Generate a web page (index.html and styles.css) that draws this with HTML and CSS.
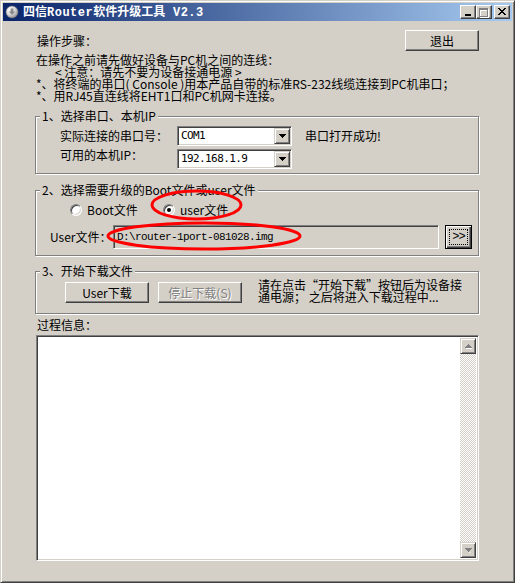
FILE: index.html
```html
<!DOCTYPE html>
<html lang="zh-CN">
<head>
<meta charset="utf-8">
<title>四信Router软件升级工具 V2.3</title>
<link rel="stylesheet" href="styles.css">
</head>
<body>
<div class="window">
  <div class="titlebar">
    <svg class="app-icon" width="16" height="16" viewBox="0 0 16 16">
      <defs>
        <radialGradient id="ig" cx="35%" cy="30%" r="75%">
          <stop offset="0" stop-color="#ffffff"/>
          <stop offset="0.55" stop-color="#d8d8d8"/>
          <stop offset="1" stop-color="#8c8c8c"/>
        </radialGradient>
      </defs>
      <circle cx="8" cy="8" r="6" fill="url(#ig)" stroke="#7a7a7a" stroke-width="0.6"/>
      <path d="M6.6 4.6 h2.8 v3 h1.8 l-3.2 3.4 l-3.2 -3.4 h1.8z" fill="#8a8a8a"/>
    </svg>
    <span class="title">四信<span class="lat">Router</span>软件升级工具<span class="lat"> V2.3</span></span>
    <div class="caption-btns">
      <span class="cbtn">
        <svg width="14" height="12" viewBox="0 0 14 12" shape-rendering="crispEdges"><rect x="4" y="8" width="6" height="2" fill="#000"/></svg>
      </span>
      <span class="cbtn">
        <svg width="14" height="12" viewBox="0 0 14 12" shape-rendering="crispEdges">
          <path d="M3 3 h9 v9 h-9z M4 5 h7 v6 h-7z" fill="#fff" fill-rule="evenodd"/>
          <path d="M2 2 h9 v9 h-9z M3 4 h7 v6 h-7z" fill="#808080" fill-rule="evenodd"/>
        </svg>
      </span>
      <span class="cbtn close">
        <svg width="14" height="12" viewBox="0 0 14 12" shape-rendering="crispEdges" fill="#000">
          <rect x="3" y="2" width="2" height="1"/><rect x="9" y="2" width="2" height="1"/>
          <rect x="4" y="3" width="2" height="1"/><rect x="8" y="3" width="2" height="1"/>
          <rect x="5" y="4" width="4" height="1"/>
          <rect x="6" y="5" width="2" height="1"/>
          <rect x="5" y="6" width="4" height="1"/>
          <rect x="4" y="7" width="2" height="1"/><rect x="8" y="7" width="2" height="1"/>
          <rect x="3" y="8" width="2" height="1"/><rect x="9" y="8" width="2" height="1"/>
        </svg>
      </span>
    </div>
  </div>

  <div class="client">
    <div class="top-row">
      <span class="steps-label">操作步骤：</span>
      <button class="btn exit">退出</button>
    </div>

    <div class="instructions">
      <div class="line">在操作之前请先做好设备与PC机之间的连线：</div>
      <div class="line indent">&lt; 注意：请先不要为设备接通电源 &gt;</div>
      <div class="line">*、将终端的串口( Console )用本产品自带的标准RS-232线缆连接到PC机串口；</div>
      <div class="line">*、用RJ45直连线将EHT1口和PC机网卡连接。</div>
    </div>

    <div class="group g1">
      <span class="legend">1、选择串口、本机IP</span>
      <div class="g1-grid">
        <span class="lbl">实际连接的串口号：</span>
        <span class="combo">
          <span class="combo-text">COM1</span>
          <span class="combo-btn"><svg width="7" height="4" viewBox="0 0 7 4" shape-rendering="crispEdges" fill="#000"><rect x="0" y="0" width="7" height="1"/><rect x="1" y="1" width="5" height="1"/><rect x="2" y="2" width="3" height="1"/><rect x="3" y="3" width="1" height="1"/></svg></span>
        </span>
        <span class="status">串口打开成功!</span>
        <span class="lbl lbl2">可用的本机IP：</span>
        <span class="combo">
          <span class="combo-text">192.168.1.9</span>
          <span class="combo-btn"><svg width="7" height="4" viewBox="0 0 7 4" shape-rendering="crispEdges" fill="#000"><rect x="0" y="0" width="7" height="1"/><rect x="1" y="1" width="5" height="1"/><rect x="2" y="2" width="3" height="1"/><rect x="3" y="3" width="1" height="1"/></svg></span>
        </span>
      </div>
    </div>

    <div class="group g2">
      <span class="legend">2、选择需要升级的Boot文件或user文件</span>
      <div class="radio-row">
        <span class="radio-opt"><span class="radio"></span><span>Boot文件</span></span>
        <span class="radio-opt"><span class="radio checked"></span><span>user文件</span></span>
      </div>
      <div class="file-row">
        <span class="file-label">User文件：</span>
        <span class="edit">D:\router-1port-081028.img</span>
        <button class="btn browse"><span class="focus">&gt;&gt;</span></button>
      </div>
    </div>

    <div class="group g3">
      <span class="legend">3、开始下载文件</span>
      <div class="dl-row">
        <button class="btn dl">User下载</button>
        <button class="btn dl stop">停止下载(S)</button>
        <div class="note">请在点击“开始下载”按钮后为设备接<br>通电源； 之后将进入下载过程中...</div>
      </div>
    </div>

    <div class="proc-label">过程信息：</div>
    <div class="listbox">
      <div class="vscroll">
        <span class="sbtn"><svg width="7" height="5" viewBox="0 0 7 5" shape-rendering="crispEdges"><path d="M3 0h1v1h1v1h1v1h1v1H0V3h1V2h1V1h1z" fill="#808080"/><rect x="1" y="4" width="7" height="1" fill="#fff"/></svg></span>
        <span class="track"></span>
        <span class="sbtn"><svg width="7" height="5" viewBox="0 0 7 5" shape-rendering="crispEdges"><path d="M0 0h7v1H6v1H5v1H4v1H3V3H2V2H1V1H0z" fill="#808080"/><rect x="4" y="4" width="1" height="1" fill="#fff"/></svg></span>
      </div>
    </div>
  </div>

  <svg class="overlay" width="515" height="583" viewBox="0 0 515 583">
    <ellipse cx="196.5" cy="205" rx="44.5" ry="14" fill="none" stroke="#ff0000" stroke-width="3"/>
    <ellipse cx="204" cy="236" rx="96" ry="13" fill="none" stroke="#ff0000" stroke-width="3"/>
  </svg>
</div>
</body>
</html>
```

FILE: styles.css
```css
* { box-sizing: border-box; }
html, body { margin: 0; padding: 0; }
body {
  width: 515px;
  height: 583px;
  overflow: hidden;
  background: #D4D0C8;
  font-family: "Noto Sans CJK SC", "Noto Sans", sans-serif;
  font-size: 12px;
  line-height: 12px;
  color: #000;
}

.window {
  position: relative;
  width: 515px;
  height: 583px;
  background: #D4D0C8;
  border: 1px solid;
  border-color: #D4D0C8 #404040 #404040 #D4D0C8;
  box-shadow: inset 1px 1px #fff, inset -1px -1px #808080;
  padding: 2px;
}

/* title bar */
.titlebar {
  display: flex;
  align-items: center;
  height: 18px;
  padding-left: 1px;
  background: linear-gradient(to right, #0A246A, #A6CAF0);
}
.app-icon { flex: none; }
.title {
  margin-left: 3px;
  color: #fff;
  font-weight: bold;
  white-space: pre;
}
.title .lat {
  font-family: "Liberation Mono", monospace;
  font-size: 12px;
  letter-spacing: 0.5px;
}
.caption-btns {
  margin-left: auto;
  margin-right: 2px;
  display: flex;
}
.cbtn {
  width: 16px;
  height: 14px;
  background: #D4D0C8;
  border: 1px solid;
  border-color: #fff #404040 #404040 #fff;
  box-shadow: inset -1px -1px #808080;
  display: block;
}
.cbtn svg { display: block; }
.cbtn.close { margin-left: 2px; }

/* client */
.client { padding-left: 32px; }

.btn {
  font: inherit;
  color: #000;
  margin: 0;
  padding: 0;
  background: #D4D0C8;
  border: 1px solid;
  border-color: #fff #404040 #404040 #fff;
  box-shadow: inset -1px -1px #808080;
  display: flex;
  align-items: center;
  justify-content: center;
  appearance: none;
  line-height: 12px;
  white-space: nowrap;
}

.top-row {
  width: 444px;
  margin-top: 9px;
  height: 21px;
  display: flex;
  align-items: center;
  justify-content: space-between;
}
.steps-label { margin-left: 2px; }
.btn.exit { width: 74px; height: 21px; }

.instructions {
  margin-top: 3px;
  padding-left: 1px;
  white-space: nowrap;
}
.instructions .line { height: 12px; white-space: pre; }
.instructions .indent { padding-left: 19px; }

/* group boxes */
.group {
  position: relative;
  width: 444px;
  border: 1px solid #808080;
  box-shadow: inset 1px 1px #fff, 1px 1px #fff;
}
.legend {
  position: absolute;
  top: -7px;
  left: 4px;
  padding: 0 2px;
  background: #D4D0C8;
  white-space: nowrap;
}

.g1 { margin-top: 14px; height: 58px; padding: 9px 0 0 24px; }
.g1-grid {
  display: grid;
  grid-template-columns: 117px 115px auto;
  grid-template-rows: 20px 20px;
  row-gap: 3px;
  align-items: center;
}
.lbl { white-space: nowrap; }
.lbl2 { align-self: start; }
.status { margin-left: 13px; white-space: nowrap; }

.combo {
  display: flex;
  align-items: center;
  height: 20px;
  padding: 1px;
  background: #fff;
  border: 1px solid;
  border-color: #808080 #fff #fff #808080;
  box-shadow: inset 1px 1px #404040, inset -1px -1px #D4D0C8;
}
.combo-text {
  padding-left: 2px;
  font-family: "DejaVu Sans Mono", monospace;
  font-size: 11px;
  letter-spacing: -0.6px;
}
.combo-btn {
  margin-left: auto;
  width: 16px;
  height: 16px;
  background: #D4D0C8;
  border: 1px solid;
  border-color: #D4D0C8 #404040 #404040 #D4D0C8;
  box-shadow: inset 1px 1px #fff, inset -1px -1px #808080;
  display: flex;
  align-items: center;
  justify-content: center;
}
.combo-btn svg { display: block; }

.g2 { margin-top: 16px; height: 66px; padding-top: 12px; }
.radio-row {
  display: flex;
  align-items: center;
  height: 14px;
  padding-left: 34px;
}
.radio-opt {
  display: flex;
  align-items: center;
  gap: 5px;
  width: 93px;
  white-space: nowrap;
}
.radio {
  position: relative;
  flex: none;
  width: 12px;
  height: 12px;
  border-radius: 50%;
  background: #fff;
  border: 1px solid;
  border-color: #808080 #fff #fff #808080;
  box-shadow: inset 1px 1px #404040, inset -1px -1px #D4D0C8;
}
.radio.checked::after {
  content: "";
  position: absolute;
  left: 3px;
  top: 3px;
  width: 4px;
  height: 4px;
  border-radius: 50%;
  background: #000;
}
.file-row {
  display: flex;
  align-items: center;
  margin-top: 8px;
  height: 24px;
  padding-left: 14px;
}
.file-label { width: 63px; white-space: nowrap; }
.edit {
  width: 326px;
  height: 24px;
  display: flex;
  align-items: center;
  padding-left: 3px;
  background: #D4D0C8;
  border: 1px solid;
  border-color: #808080 #fff #fff #808080;
  box-shadow: inset 1px 1px #404040, inset -1px -1px #D4D0C8;
  font-family: "Liberation Mono", monospace;
  font-size: 11px;
  letter-spacing: -0.6px;
  white-space: nowrap;
}
.btn.browse {
  margin-left: 6px;
  width: 27px;
  height: 24px;
  border: 1px solid #000;
  box-shadow: inset 1px 1px #fff, inset -1px -1px #404040, inset -2px -2px #808080;
  padding: 3px;
}
.browse .focus {
  width: 100%;
  height: 100%;
  border: 1px dotted #000;
  display: flex;
  align-items: center;
  justify-content: center;
  font-family: "Liberation Mono", monospace;
  font-size: 12px;
  letter-spacing: -1px;
}

.g3 { margin-top: 15px; height: 43px; padding: 10px 0 0 29px; }
.dl-row { display: flex; align-items: flex-start; }
.btn.dl { width: 84px; height: 21px; }
.btn.stop {
  margin-left: 9px;
  color: #808080;
  text-shadow: 1px 1px 0 #fff;
}
.note {
  margin-left: 16px;
  margin-top: -3px;
  white-space: nowrap;
}

.proc-label { margin-top: 5px; padding-left: 2px; }
.listbox {
  margin-top: 4px;
  margin-left: 1px;
  width: 443px;
  height: 226px;
  padding: 2px;
  display: flex;
  justify-content: flex-end;
  background: #fff;
  border: 1px solid;
  border-color: #808080 #fff #fff #808080;
  box-shadow: inset 1px 1px #404040, inset -1px -1px #D4D0C8;
}
.vscroll {
  width: 16px;
  display: flex;
  flex-direction: column;
  background: repeating-conic-gradient(#D4D0C8 0 25%, #fff 0 50%) 0 0 / 2px 2px;
}
.sbtn {
  flex: none;
  width: 16px;
  height: 16px;
  background: #D4D0C8;
  border: 1px solid;
  border-color: #D4D0C8 #404040 #404040 #D4D0C8;
  box-shadow: inset 1px 1px #fff, inset -1px -1px #808080;
  display: flex;
  align-items: center;
  justify-content: center;
}
.sbtn svg { display: block; }
.track { flex: 1; }

.overlay {
  position: absolute;
  left: -1px;
  top: -1px;
  pointer-events: none;
}
```
